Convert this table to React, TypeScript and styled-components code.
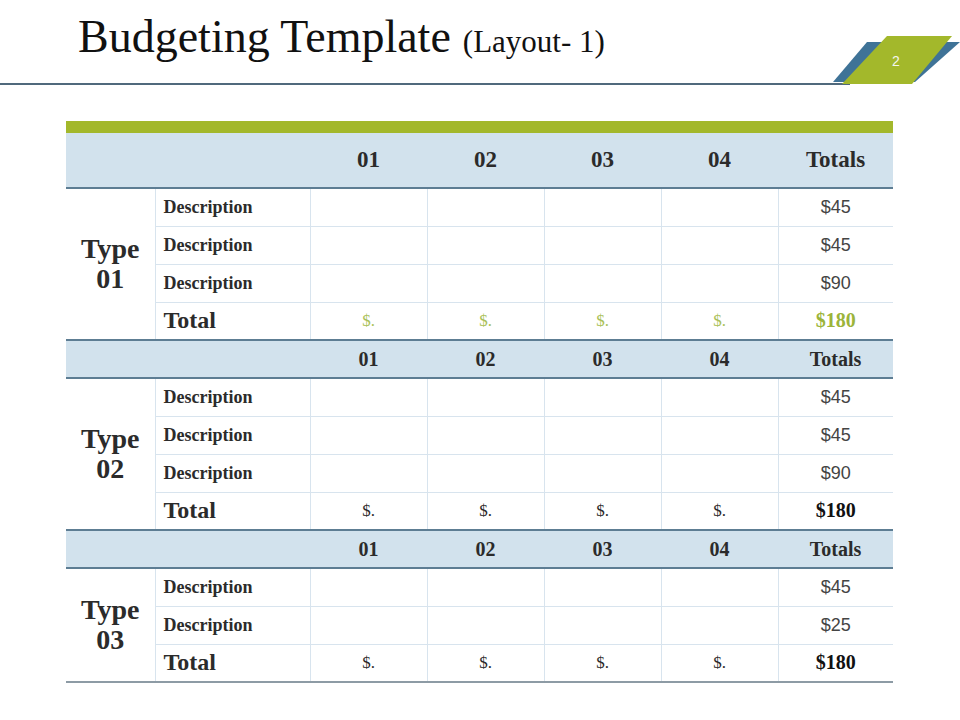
import React from 'react';
import styled, { createGlobalStyle } from 'styled-components';

const GlobalStyle = createGlobalStyle`
  body {
    margin: 0;
    background: #ffffff;
    font-family: "Liberation Serif", "Times New Roman", serif;
    color: #2f2f2f;
  }
`;

const Slide = styled.div`
  position: relative;
  width: 960px;
  height: 720px;
  background: #ffffff;
  overflow: hidden;
`;

const Header = styled.header`
  display: flex;
  align-items: baseline;
  gap: 12px;
  width: 850px;
  height: 85px;
  box-sizing: border-box;
  padding: 12px 0 0 78px;
  border-bottom: 2px solid #50697c;
`;

const Title = styled.h1`
  margin: 0;
  font-family: "Liberation Serif", serif;
  font-weight: normal;
  font-size: 46px;
  line-height: 50px;
  color: #111111;
`;

const SubTitle = styled.span`
  font-family: "Liberation Serif", serif;
  font-size: 31px;
  color: #111111;
`;

const Badge = styled.div`
  position: absolute;
  left: 830px;
  top: 34px;
  width: 130px;
  height: 54px;
`;

const TableWrap = styled.div`
  width: 827px;
  margin: 36px 0 0 66px;
`;

const GreenBar = styled.div`
  height: 12px;
  background: #a3b82b;
`;

const Table = styled.table`
  width: 100%;
  border-collapse: collapse;
  table-layout: fixed;
`;

const HeadRow = styled.tr<{ first?: boolean }>`
  background: #d2e2ed;
  height: ${({ first }) => (first ? '55px' : '38px')};
  border-top: ${({ first }) => (first ? 'none' : '2px solid #5d7d93')};
  border-bottom: 2px solid #5d7d93;
`;

const HeadCell = styled.th<{ big?: boolean }>`
  padding: 0;
  text-align: center;
  font-weight: bold;
  font-size: ${({ big }) => (big ? '23px' : '20px')};
  color: #2b2b2b;
`;

const BodyRow = styled.tr<{ last?: boolean }>`
  height: 38px;
  border-bottom: ${({ last }) => (last ? '2px solid #8d9ba5' : '1px solid #d8e4ee')};
`;

const TypeCell = styled.td`
  padding: 0;
  text-align: center;
  vertical-align: middle;
  font-weight: bold;
  font-size: 28px;
  line-height: 30px;
  color: #2b2b2b;
  border-right: 1px solid #d8e4ee;
`;

const LabelCell = styled.td<{ total?: boolean }>`
  padding: 0 0 0 8px;
  font-weight: bold;
  font-size: ${({ total }) => (total ? '24px' : '18px')};
  color: #2b2b2b;
  border-right: 1px solid #d8e4ee;
`;

const ValueCell = styled.td<{ green?: boolean }>`
  padding: 0;
  text-align: center;
  font-size: 17px;
  color: ${({ green }) => (green ? '#a9c158' : '#2b2b2b')};
  border-right: 1px solid #d8e4ee;
`;

const AmountCell = styled.td`
  padding: 0;
  text-align: center;
  font-family: "Liberation Sans", Arial, sans-serif;
  font-size: 18px;
  color: #444444;
`;

const SumCell = styled.td<{ green?: boolean }>`
  padding: 0;
  text-align: center;
  font-weight: bold;
  font-size: 20px;
  color: ${({ green }) => (green ? '#9cb43a' : '#111111')};
`;

type Section = {
  label: string;
  amounts: string[];
  green?: boolean;
};

const sections: Section[] = [
  { label: '01', amounts: ['$45', '$45', '$90'], green: true },
  { label: '02', amounts: ['$45', '$45', '$90'] },
  { label: '03', amounts: ['$45', '$25'] },
];

const cols = ['01', '02', '03', '04'];

const SectionRows: React.FC<{ section: Section; index: number; last: boolean }> = ({ section, index, last }) => (
  <>
    <HeadRow first={index === 0}>
      <HeadCell colSpan={2} />
      {cols.map((c) => (
        <HeadCell key={c} big={index === 0}>{c}</HeadCell>
      ))}
      <HeadCell big={index === 0}>Totals</HeadCell>
    </HeadRow>
    {section.amounts.map((amt, i) => (
      <BodyRow key={i}>
        {i === 0 && (
          <TypeCell rowSpan={section.amounts.length + 1}>
            Type
            <br />
            {section.label}
          </TypeCell>
        )}
        <LabelCell>Description</LabelCell>
        {cols.map((c) => (
          <ValueCell key={c} />
        ))}
        <AmountCell>{amt}</AmountCell>
      </BodyRow>
    ))}
    <BodyRow last={last}>
      <LabelCell total>Total</LabelCell>
      {cols.map((c) => (
        <ValueCell key={c} green={section.green}>$.</ValueCell>
      ))}
      <SumCell green={section.green}>$180</SumCell>
    </BodyRow>
  </>
);

const App: React.FC = () => (
  <Slide>
    <GlobalStyle />
    <Header>
      <Title>Budgeting Template</Title>
      <SubTitle>(Layout- 1)</SubTitle>
    </Header>
    <Badge>
      <svg width="130" height="54" viewBox="830 34 130 54">
        <polygon points="867,42 960,42 915,82 833,82" fill="#3f7397" />
        <polygon points="887,36 952,36 912,84 842,84" fill="#a3b82b" />
        <text x="896" y="66" textAnchor="middle" fontFamily="Liberation Sans, Arial, sans-serif" fontSize="14" fill="#f4f6ee">2</text>
      </svg>
    </Badge>
    <TableWrap>
      <GreenBar />
      <Table>
        <colgroup>
          <col style={{ width: '89px' }} />
          <col style={{ width: '155px' }} />
          <col style={{ width: '117px' }} />
          <col style={{ width: '117px' }} />
          <col style={{ width: '117px' }} />
          <col style={{ width: '117px' }} />
          <col style={{ width: '115px' }} />
        </colgroup>
        <tbody>
          {sections.map((s, i) => (
            <SectionRows key={s.label} section={s} index={i} last={i === sections.length - 1} />
          ))}
        </tbody>
      </Table>
    </TableWrap>
  </Slide>
);

export default App;
